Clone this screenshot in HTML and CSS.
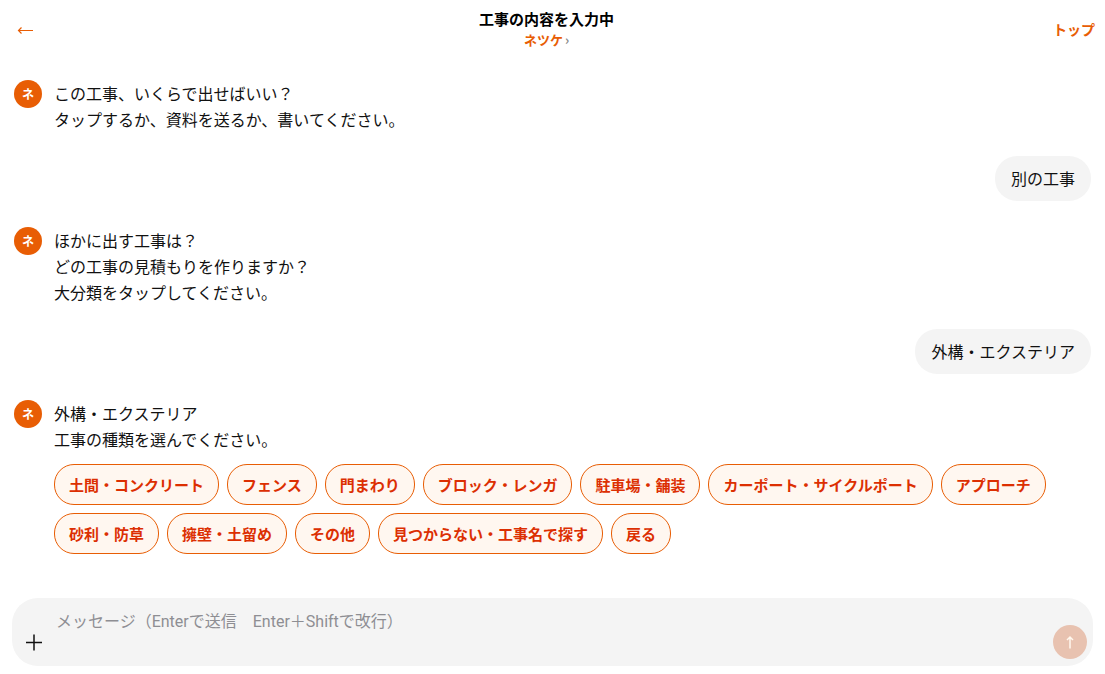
FILE: index.html
```
<!DOCTYPE html>
<html lang="ja">
<head>
    <meta charset="UTF-8">
    <meta name="viewport" content="width=device-width, initial-scale=1.0">
    <title>工事の内容を入力中</title>
    <link rel="stylesheet" href="styles.css">
</head>
<body>
    <header class="header">
        <a class="back" href="#" aria-label="戻る">
            <svg width="18" height="12" viewBox="0 0 18 12" aria-hidden="true">
                <path d="M17 7.5H2.5M5.5 4.5L2.5 7.5L5.5 10.5" fill="none" stroke="#e85d04" stroke-width="1.2"/>
            </svg>
        </a>
        <div class="heading">
            <h1>工事の内容を入力中</h1>
            <a class="agent" href="#">ネツケ<span>›</span></a>
        </div>
        <a class="top-link" href="#">トップ</a>
    </header>

    <main class="chat">
        <div class="bot">
            <div class="avatar">ネ</div>
            <div class="content">
                <p>この工事、いくらで出せばいい？<br>タップするか、資料を送るか、書いてください。</p>
            </div>
        </div>
        <div class="user">別の工事</div>
        <div class="bot">
            <div class="avatar">ネ</div>
            <div class="content">
                <p>ほかに出す工事は？<br>どの工事の見積もりを作りますか？<br>大分類をタップしてください。</p>
            </div>
        </div>
        <div class="user">外構・エクステリア</div>
        <div class="bot">
            <div class="avatar">ネ</div>
            <div class="content">
                <p>外構・エクステリア<br>工事の種類を選んでください。</p>
                <div class="chips">
                    <button type="button">土間・コンクリート</button>
                    <button type="button">フェンス</button>
                    <button type="button">門まわり</button>
                    <button type="button">ブロック・レンガ</button>
                    <button type="button">駐車場・舗装</button>
                    <button type="button">カーポート・サイクルポート</button>
                    <button type="button">アプローチ</button>
                    <button type="button">砂利・防草</button>
                    <button type="button">擁壁・土留め</button>
                    <button type="button">その他</button>
                    <button type="button">見つからない・工事名で探す</button>
                    <button type="button">戻る</button>
                </div>
            </div>
        </div>
    </main>

    <form class="composer">
        <button type="button" class="attach" aria-label="資料を追加">
            <svg width="18" height="18" viewBox="0 0 18 18" aria-hidden="true">
                <path d="M0 9.5H16M8 1.5V17.5" fill="none" stroke="#111" stroke-width="1.5"/>
            </svg>
        </button>
        <textarea rows="2" aria-label="メッセージ" placeholder="メッセージ（Enterで送信　Enter＋Shiftで改行）"></textarea>
        <button type="submit" class="send" aria-label="送信" disabled>
            <svg width="12" height="14" viewBox="0 0 12 14" aria-hidden="true">
                <path d="M6 13.5V2M3 5L6 2L9 5" fill="none" stroke="#fff8ee" stroke-width="1.5"/>
            </svg>
        </button>
    </form>
</body>
</html>
```

FILE: styles.css
```
* {
    box-sizing: border-box;
}

body {
    display: flex;
    flex-direction: column;
    min-height: 100vh;
    margin: 0;
    background: #fff;
    color: #111;
    font-family: "Noto Sans CJK JP", sans-serif;
    font-size: 16px;
    line-height: 26px;
}

button {
    font-family: inherit;
}

a {
    color: #e85d04;
    text-decoration: none;
}

.header {
    display: flex;
    align-items: center;
    height: 58px;
    padding: 0 10px;
}

.back {
    display: flex;
    width: 44px;
    padding: 0 6px;
}

.heading {
    flex: 1;
    text-align: center;
}

h1 {
    margin: 0;
    color: #000;
    font-size: 15px;
    line-height: 22px;
}

.agent {
    display: block;
    font-size: 13px;
    font-weight: bold;
    line-height: 20px;
}

.agent span {
    margin-left: 2px;
    color: #888;
}

.top-link {
    width: 56px;
    font-size: 14px;
    font-weight: bold;
    line-height: 24px;
    text-align: right;
}

.chat {
    flex: 1;
    padding: 22px 14px;
}

.bot {
    display: flex;
    gap: 12px;
}

.avatar {
    flex: none;
    width: 28px;
    height: 28px;
    border-radius: 50%;
    background: #e85d04;
    color: #fff;
    font-size: 12px;
    font-weight: bold;
    line-height: 28px;
    text-align: center;
}

.content {
    flex: 1;
}

.content p {
    margin: 0;
}

.user {
    width: fit-content;
    margin: 24px 0 26px auto;
    padding: 10px 16px;
    border-radius: 22px;
    background: #f4f4f4;
    line-height: 25px;
}

.chips {
    display: flex;
    flex-wrap: wrap;
    gap: 8px;
    margin-top: 12px;
}

.chips button {
    padding: 8px 14px;
    border: 1px solid #e85d04;
    border-radius: 20px;
    background: #fff7f0;
    color: #dc2f02;
    font-size: 15px;
    font-weight: bold;
    line-height: 23px;
    cursor: pointer;
}

.composer {
    display: flex;
    align-items: flex-end;
    margin: 0 12px 8px;
    padding: 6px 6px 7px;
    border-radius: 26px;
    background: #f4f4f4;
}

.composer button {
    display: flex;
    align-items: center;
    justify-content: center;
    height: 34px;
    padding: 0;
    border: none;
}

.composer .attach {
    width: 34px;
    background: none;
    cursor: pointer;
}

.composer textarea {
    flex: 1;
    height: 55px;
    padding: 5px 4px 0;
    border: none;
    outline: none;
    background: none;
    font-family: Roboto, "Noto Sans CJK JP", sans-serif;
    font-size: 16px;
    line-height: 26px;
    resize: none;
}

.composer textarea::placeholder {
    color: #8e8e93;
}

.composer .send {
    width: 34px;
    border-radius: 50%;
    background: #e8c2b0;
}
```
